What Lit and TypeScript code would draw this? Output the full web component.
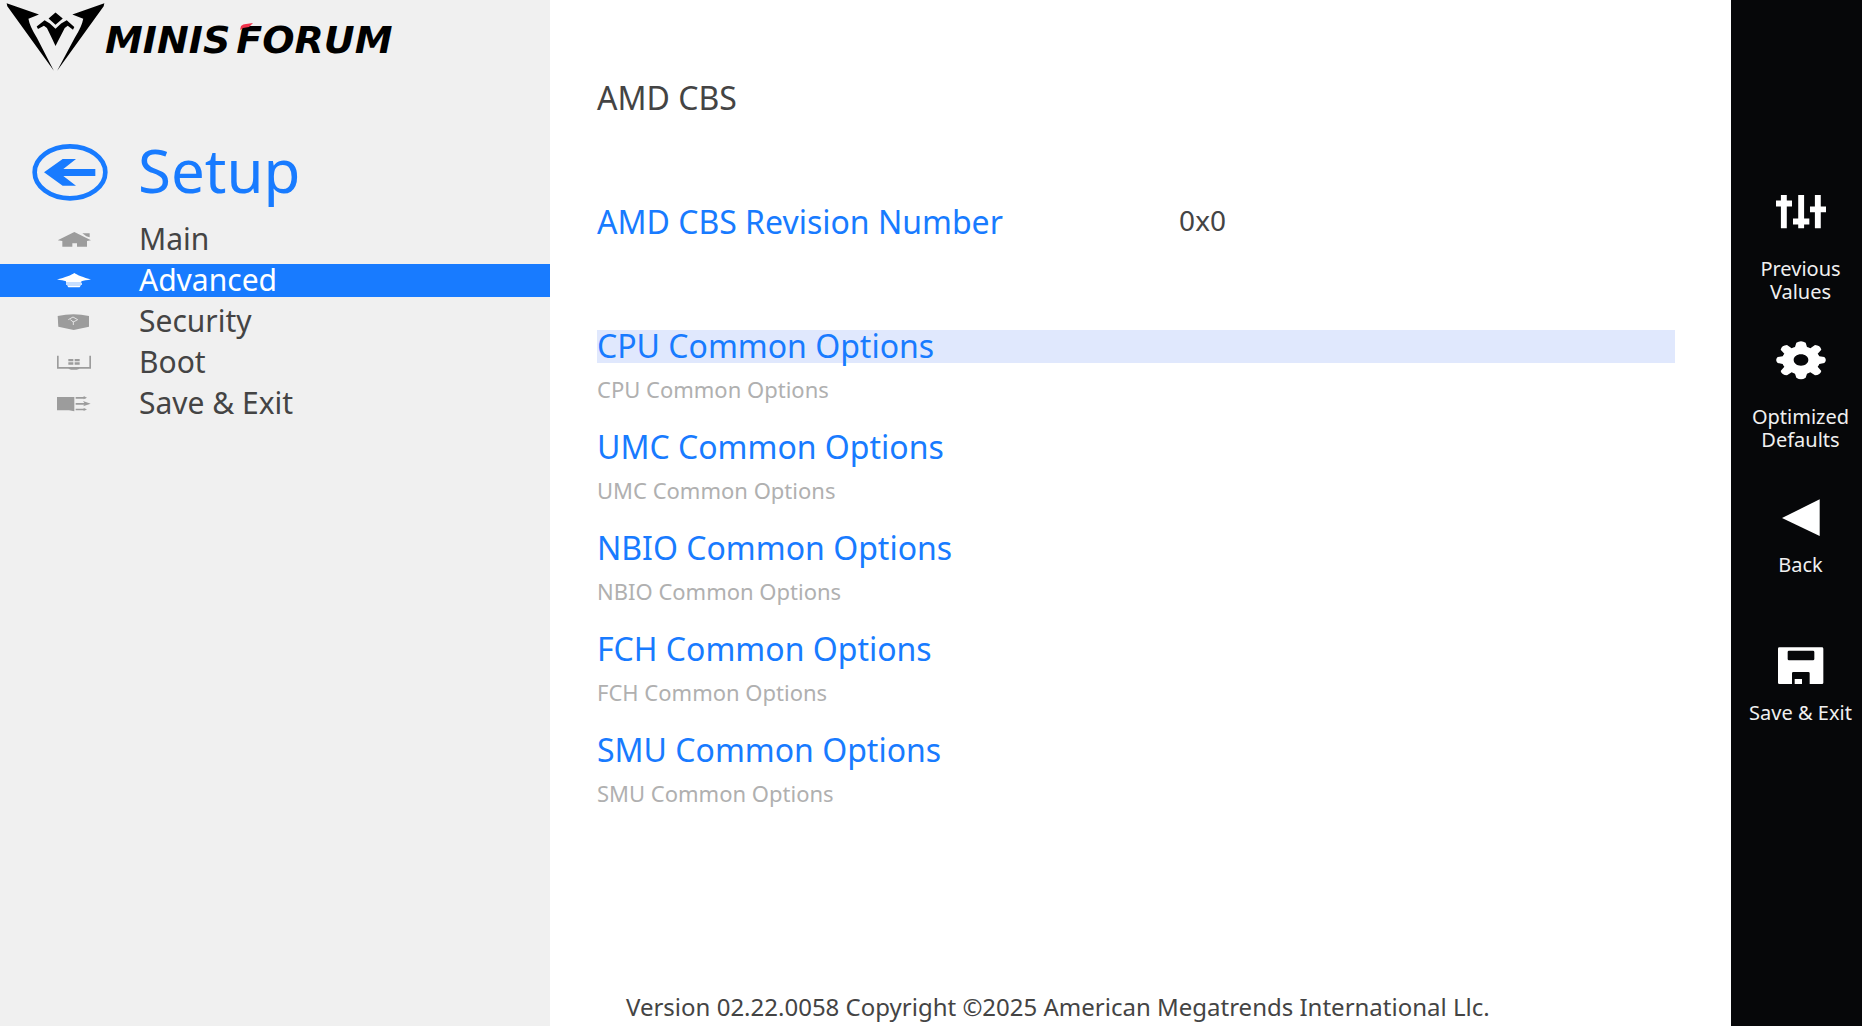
import { LitElement, html, css, svg } from "lit";
import { customElement, state } from "lit/decorators.js";
import { classMap } from "lit/directives/class-map.js";

const navIcons: Record<string, unknown> = {
  Main: svg`<path d="M52 0 L102 25 L90 27 V44 H60 V34 H46 V44 H16 V27 L2 25 Z M76 4 H98 V16 L88 13 Z"/>`,
  Advanced: svg`<path d="M52 0 C60 6 80 14 102 19 C90 22 80 23 73 25 V29 H27 V25 C20 23 12 22 0 19 C24 14 44 6 52 0 Z M27 31 H75 V35 H27 Z M30 37 H72 L68 43 H34 Z"/>`,
  Security: svg`<path d="M2 6 Q50 -4 96 6 V38 L50 48 L4 38 Z"/><path d="M34 17 L48 9 L62 17 L49 24 L40 17 M49 22 V33" fill="none" stroke="#e4e4e4" stroke-width="3"/>`,
  Boot: svg`<path d="M0 2 H5 V36 H97 V2 H102 V41 H68 Q50 48 34 41 H0 Z M34 12 H49 V19 H34 Z M53 12 H68 V19 H53 Z M34 22 H49 V29 H34 Z M53 22 H68 V29 H53 Z"/>`,
  "Save & Exit": svg`<path d="M0 3 H52 V46 L36 43 H0 Z M56 3 H86 V8 H56 Z M56 21 H82 L78 15 L101 23 L78 31 L82 26 H56 Z M56 38 H86 V43 H56 Z M80 0 L90 5 L80 10 Z M80 36 L90 40 L80 45 Z"/>`,
};

const actions = [
  {
    label: "Previous Values",
    low: false,
    icon: svg`<path d="M15 2 H33 V104 H15 Z M68 2 H86 V104 H68 Z M119 2 H137 V104 H119 Z"/><path d="M0 19 H49 V37 H0 Z M52 74 H102 V92 H52 Z M104 37 H153 V55 H104 Z"/>`,
    box: "0 -6 153 120",
  },
  {
    label: "Optimized Defaults",
    low: false,
    icon: svg`<path fill-rule="evenodd" d="M61 5 Q75 -4 89 5 L93 18 Q98 19 103 22 L117 12 Q133 13 136 26 L125 38 Q128 42 130 46 L145 48 Q154 57 145 66 L130 69 Q128 74 125 77 L136 90 Q133 102 117 103 L103 94 Q98 96 93 98 L89 110 Q75 119 61 110 L57 98 Q52 96 47 94 L33 103 Q17 102 14 90 L25 77 Q22 74 20 69 L5 66 Q-4 57 5 48 L20 46 Q22 42 25 38 L14 26 Q17 13 33 12 L47 22 Q52 19 57 18 Z M75 40 C62 40 53 48 53 57 S62 74 75 74 S97 66 97 57 S88 40 75 40 Z"/>`,
    box: "0 -3 150 120",
  },
  {
    label: "Back",
    low: true,
    icon: svg`<path d="M18 60 L131 4 V114 Z"/>`,
    box: "0 0 150 120",
  },
  {
    label: "Save & Exit",
    low: true,
    icon: svg`<path fill-rule="evenodd" d="M10 4 H138 Q142 4 142 8 V110 Q142 114 138 114 H101 V82 Q101 78 97 78 H52 Q48 78 48 82 V114 H10 Q6 114 6 110 V8 Q6 4 10 4 Z M39 14 Q35 14 35 18 V39 Q35 43 39 43 H111 Q115 43 115 39 V18 Q115 14 111 14 Z"/><path d="M56 99 H78 V114 H56 Z"/>`,
    box: "0 0 150 120",
  },
];

const options = ["CPU", "UMC", "NBIO", "FCH", "SMU"].map((n) => `${n} Common Options`);

@customElement("app-root")
export class AppRoot extends LitElement {
  @state() private page = "Advanced";
  @state() private selected = 0;

  static styles = css`
    :host {
      display: grid;
      grid-template-columns: 550px 1fr 131px;
      min-height: 100vh;
      background: #ffffff;
      color: #444444;
      font-family: "Noto Sans", sans-serif;
    }
    a {
      color: inherit;
      text-decoration: none;
    }
    button {
      border: 0;
      padding: 0;
      background: none;
      color: inherit;
      font: inherit;
      cursor: pointer;
    }
    svg {
      display: block;
      flex: none;
    }
    h1,
    h2,
    p,
    dl,
    dd,
    ul {
      margin: 0;
      padding: 0;
      font-weight: 400;
      list-style: none;
    }
    .sidebar {
      background: #f0f0f0;
    }
    .brand {
      display: flex;
      height: 72px;
      padding: 3px 0 0 6px;
      box-sizing: border-box;
      color: #000000;
    }
    .mark {
      width: 99px;
      height: 68px;
    }
    .word {
      display: flex;
      gap: 6px;
      padding-top: 15px;
      font: italic 700 38px/44px "DejaVu Sans", sans-serif;
    }
    .forum {
      position: relative;
    }
    .accent {
      position: absolute;
      left: 3px;
      top: 5px;
      width: 14px;
      height: 7px;
    }
    .setup {
      display: flex;
      align-items: center;
      gap: 30px;
      padding: 64px 0 15px 32px;
      height: 72px;
      color: #187bff;
    }
    .setup h1 {
      padding-bottom: 4px;
      font-size: 60px;
      line-height: 68px;
    }
    .round {
      width: 76px;
      height: 57px;
    }
    .menu {
      display: grid;
      gap: 8px;
    }
    .entry {
      display: flex;
      align-items: center;
      gap: 48px;
      height: 33px;
      padding-left: 57px;
      font-size: 30px;
      line-height: 31px;
    }
    .entry span {
      padding-bottom: 2px;
    }
    .entry svg {
      width: 34px;
      height: 16px;
      fill: #9c9c9c;
    }
    .entry.current {
      background: #187bff;
      color: #ffffff;
    }
    .entry.current svg {
      fill: #ffffff;
    }
    .main {
      display: flex;
      flex-direction: column;
      padding: 80px 56px 0 47px;
    }
    .title {
      font-size: 32px;
      line-height: 36px;
    }
    .revision {
      display: grid;
      grid-template-columns: 54% 1fr;
      align-items: start;
      margin: 88px 0 90px;
      font-size: 32px;
      line-height: 36px;
    }
    .revision dt {
      color: #187bff;
    }
    .revision dd {
      font-size: 28px;
      line-height: 32px;
    }
    .options {
      display: grid;
      gap: 24px;
    }
    .option {
      display: block;
      width: 100%;
      padding-bottom: 2px;
      text-align: left;
      color: #187bff;
      font-size: 32px;
      line-height: 31px;
    }
    .option.selected {
      background: #e0e8fd;
    }
    .hint {
      padding-top: 8px;
      color: #b0b0b0;
      font-size: 22px;
      line-height: 36px;
    }
    .footer {
      margin-top: auto;
      padding: 0 0 4px 29px;
      font-size: 24px;
      line-height: 30px;
    }
    .rail {
      display: flex;
      flex-direction: column;
      padding: 192px 0 0 8px;
      background: #060709;
      color: #f0f0f0;
    }
    .action {
      display: flex;
      flex-direction: column;
      align-items: center;
      gap: 15px;
      height: 148px;
      font-size: 20px;
      line-height: 23px;
    }
    .picture {
      display: flex;
      align-items: flex-start;
      height: 50px;
    }
    .picture.low {
      align-items: flex-end;
    }
    .picture svg {
      width: 50px;
      height: 40px;
      fill: #ffffff;
    }
  `;

  render() {
    return html`
      <aside class="sidebar">
        <div class="brand">
          <svg class="mark" viewBox="18 8 296 206" aria-hidden="true">
            <path d="M18 9 L116 43 L84 56 Q88 80 110 114 L161 213 L20 18 Z M314 9 L217 43 L250 56 Q246 80 224 114 L171 213 L312 18 Z M166 37 L188 55 L166 74 L145 55 Z M109 79 L133 60 L149 70 L166 86 L183 70 L200 60 L223 81 L219 89 L203 77 L194 84 Q186 100 166 138 Q148 100 140 84 L131 77 L113 87 Z" />
          </svg>
          <div class="word">
            <span>MINIS</span>
            <span class="forum">FORUM
              <svg class="accent" viewBox="0 0 14 7" aria-hidden="true">
                <path d="M1 7 L2 3 Q4 1 7 1 L14 0 L10 4 L4 5 Z" fill="#f0324b" />
              </svg>
            </span>
          </div>
        </div>
        <div class="setup">
          <button aria-label="Go back">
            <svg class="round" viewBox="96 42 228 171" aria-hidden="true">
              <ellipse cx="210" cy="127" rx="106" ry="78" fill="none" stroke="#187bff" stroke-width="14" />
              <path d="M132 127 L188 87 H228 L190 117 H286 V138 H190 L228 167 H188 Z" fill="#187bff" />
            </svg>
          </button>
          <h1>Setup</h1>
        </div>
        <nav class="menu" aria-label="Setup">
          ${Object.entries(navIcons).map(
            ([name, icon]) => html`
              <a
                href="#"
                class=${classMap({ entry: true, current: name === this.page })}
                @click=${(e: Event) => {
                  e.preventDefault();
                  this.page = name;
                }}
              >
                <svg viewBox="0 0 102 48" aria-hidden="true">${icon}</svg>
                <span>${name}</span>
              </a>
            `
          )}
        </nav>
      </aside>
      <main class="main">
        <h2 class="title">AMD CBS</h2>
        <dl class="revision">
          <dt>AMD CBS Revision Number</dt>
          <dd>0x0</dd>
        </dl>
        <ul class="options">
          ${options.map(
            (name, i) => html`
              <li>
                <button
                  class=${classMap({ option: true, selected: i === this.selected })}
                  @click=${() => (this.selected = i)}
                >
                  ${name}
                </button>
                <p class="hint">${name}</p>
              </li>
            `
          )}
        </ul>
        <footer class="footer">Version 02.22.0058 Copyright ©2025 American Megatrends International Llc.</footer>
      </main>
      <div class="rail">
        ${actions.map(
          (a) => html`
            <button class="action">
              <span class=${classMap({ picture: true, low: a.low })}>
                <svg viewBox=${a.box} aria-hidden="true">${a.icon}</svg>
              </span>
              <span>${a.label}</span>
            </button>
          `
        )}
      </div>
    `;
  }
}
